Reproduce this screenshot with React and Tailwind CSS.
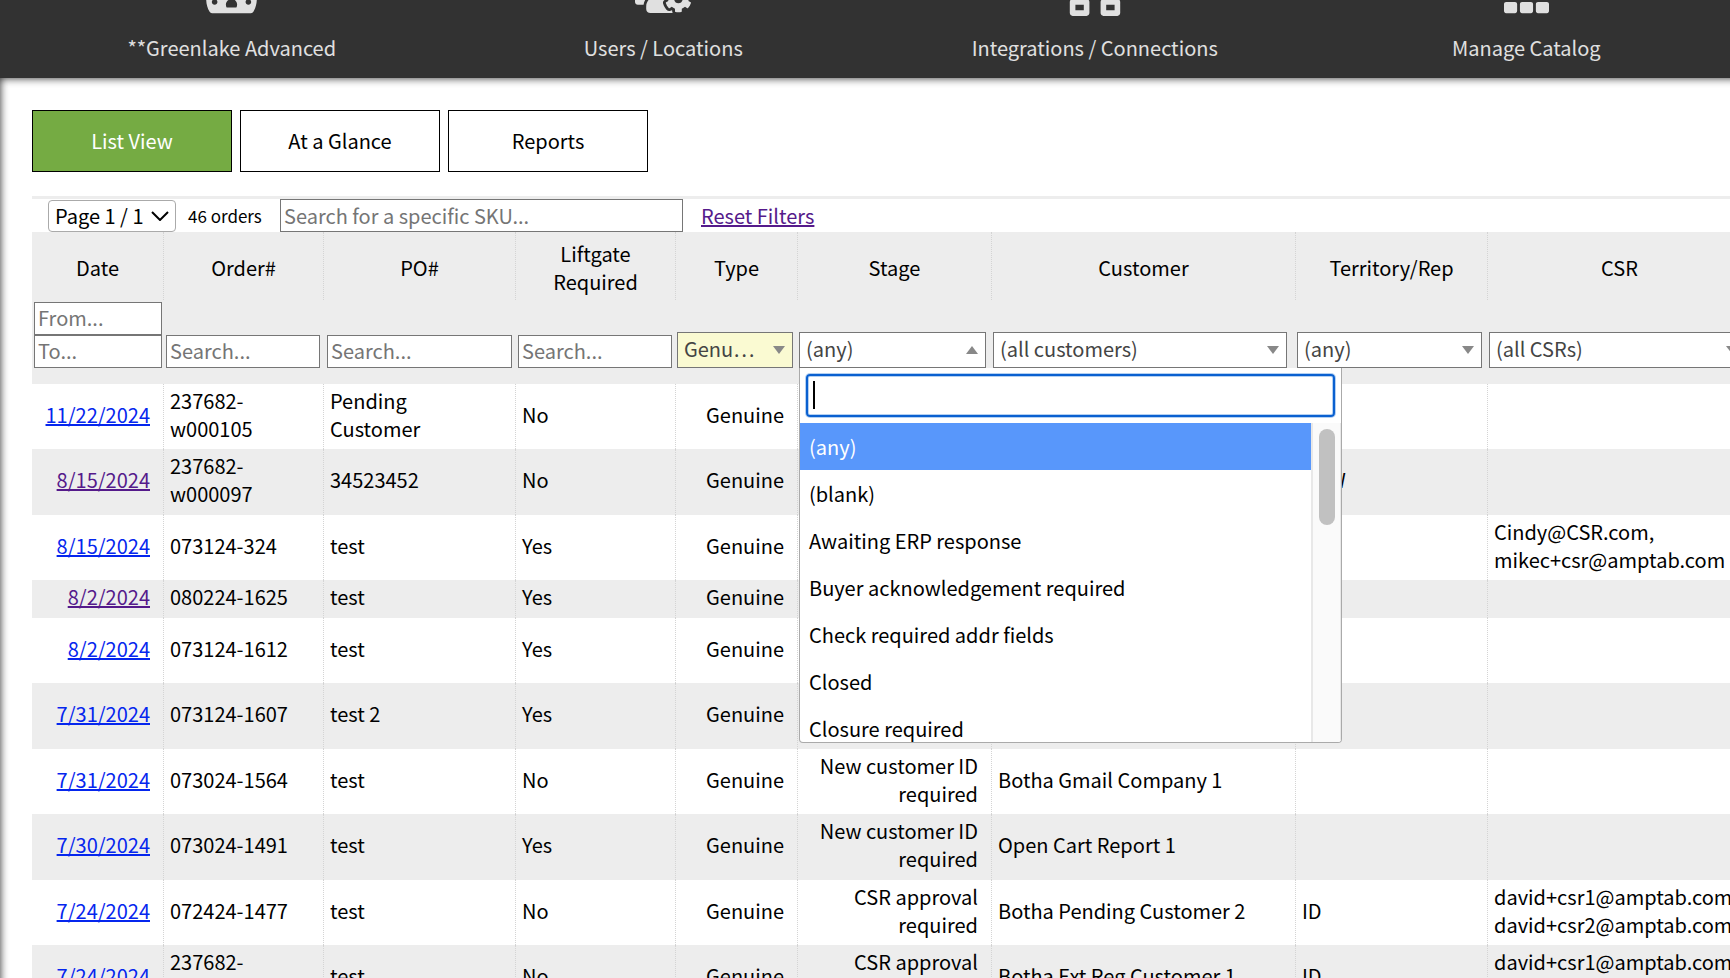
import { useState } from "react";
import { FaTachometerAlt, FaUsersCog, FaNetworkWired, FaTh } from "react-icons/fa";

const navItems = [
    { label: "**Greenlake Advanced", icon: FaTachometerAlt, size: "w-[51px]" },
    { label: "Users / Locations", icon: FaUsersCog, size: "w-[56px]" },
    { label: "Integrations / Connections", icon: FaNetworkWired, size: "w-[56px]" },
    { label: "Manage Catalog", icon: FaTh, size: "w-[45px]" },
];

const tabs = ["List View", "At a Glance", "Reports"];

const stages = [
    "(any)",
    "(blank)",
    "Awaiting ERP response",
    "Buyer acknowledgement required",
    "Check required addr fields",
    "Closed",
    "Closure required",
];

const orders = [
    { date: "11/22/2024", order: "237682-w000105", po: "Pending\nCustomer", liftgate: "No" },
    { date: "8/15/2024", visited: true, order: "237682-w000097", po: "34523452", liftgate: "No", territory: "NEW" },
    { date: "8/15/2024", order: "073124-324", po: "test", liftgate: "Yes", csr: "Cindy@CSR.com,\nmikec+csr@amptab.com" },
    { date: "8/2/2024", visited: true, order: "080224-1625", po: "test", liftgate: "Yes", compact: true },
    { date: "8/2/2024", order: "073124-1612", po: "test", liftgate: "Yes" },
    { date: "7/31/2024", order: "073124-1607", po: "test 2", liftgate: "Yes" },
    { date: "7/31/2024", order: "073024-1564", po: "test", liftgate: "No", stage: "New customer ID required", customer: "Botha Gmail Company 1" },
    { date: "7/30/2024", order: "073024-1491", po: "test", liftgate: "Yes", stage: "New customer ID required", customer: "Open Cart Report 1" },
    { date: "7/24/2024", order: "072424-1477", po: "test", liftgate: "No", stage: "CSR approval required", customer: "Botha Pending Customer 2", territory: "ID", csr: "david+csr1@amptab.com,\ndavid+csr2@amptab.com" },
    { date: "7/24/2024", order: "237682-w000091", po: "test", liftgate: "No", stage: "CSR approval required", customer: "Botha Ext Reg Customer 1", territory: "ID", csr: "david+csr1@amptab.com,\ndavid+csr2@amptab.com" },
];

const headings = ["Date", "Order#", "PO#", "Liftgate Required", "Type", "Stage", "Customer", "Territory/Rep", "CSR"];

function FilterInput({ label, placeholder }) {
    return (
        <input
            type="text"
            aria-label={label}
            placeholder={placeholder}
            className="block h-[33px] w-full border border-[#767676] bg-white px-[3px] pb-[2px] placeholder:text-[#757575] focus:outline-none"
        />
    );
}

function FilterSelect({ label, value, open, className = "bg-white pr-8" }) {
    return (
        <div className="relative">
            <select
                aria-label={label}
                defaultValue={value}
                className={`block h-9 w-full appearance-none text-ellipsis border border-[#767676] pb-[2px] pl-[6px] text-[#444] ${className}`}
            >
                <option>{value}</option>
            </select>
            <svg viewBox="0 0 12 8" className="pointer-events-none absolute right-2 top-[14px] h-2 w-3 fill-[#888]">
                <path d={open ? "M0 8 6 0l6 8z" : "M0 0h12L6 8z"} />
            </svg>
        </div>
    );
}

function StageDropdown() {
    const [active, setActive] = useState("(any)");

    return (
        <div className="absolute left-px top-[68px] z-10 w-[543px] overflow-hidden rounded-b border border-t-0 border-[#aaa] bg-white text-left">
            <div className="relative px-[6px] pb-[6px] pt-[6px]">
                <input
                    type="text"
                    aria-label="Search stages"
                    className="block h-[43px] w-full rounded border-2 border-[#0a60d0] px-1 shadow-[0_0_0_1px_#b3d0f2,inset_0_0_0_1px_#b3d0f2] focus:outline-none"
                />
                <span className="absolute left-[13px] top-[13px] h-7 w-[2px] bg-black" />
            </div>
            <div className="flex h-[319px]">
                <ul role="listbox" aria-label="Stage" className="flex-1 overflow-hidden">
                    {stages.map((stage) => (
                        <li
                            key={stage}
                            role="option"
                            aria-selected={stage === active}
                            onMouseEnter={() => setActive(stage)}
                            className={`h-[47px] px-[9px] leading-[47px] ${stage === active ? "bg-[#5897fb] text-white" : "text-black"}`}
                        >
                            {stage}
                        </li>
                    ))}
                </ul>
                <div className="w-[30px] border-l-2 border-r border-[#e8e8e8] bg-[#fafafa] pl-[6px] pt-[6px]">
                    <div className="h-24 w-4 rounded-full bg-[#c1c1c1]" />
                </div>
            </div>
        </div>
    );
}

function OrdersTable() {
    const cell = "border-r border-dotted border-[#d4d4d4] pb-1 pl-[6px] pr-[13px] whitespace-pre-line";

    return (
        <table className="w-[1720px] table-fixed border-separate border-spacing-0">
            <colgroup>
                <col className="w-[132px]" />
                <col className="w-[160px]" />
                <col className="w-[192px]" />
                <col className="w-[160px]" />
                <col className="w-[122px]" />
                <col className="w-[194px]" />
                <col className="w-[304px]" />
                <col className="w-[192px]" />
                <col className="w-[264px]" />
            </colgroup>
            <thead className="bg-[#ededed]">
                <tr className="h-[68px]">
                    {headings.map((heading) => (
                        <th key={heading} scope="col" className="border-r border-dotted border-[#d4d4d4] px-7 pt-[3px] font-normal">
                            <span className="flex justify-center">{heading}</span>
                        </th>
                    ))}
                </tr>
                <tr className="h-[84px] align-bottom">
                    <td className="px-[2px] pb-4">
                        <FilterInput label="Date from" placeholder="From..." />
                        <FilterInput label="Date to" placeholder="To..." />
                    </td>
                    <td className="pb-4 pl-[2px] pr-1">
                        <FilterInput label="Order number" placeholder="Search..." />
                    </td>
                    <td className="pb-4 pl-[3px] pr-1">
                        <FilterInput label="PO number" placeholder="Search..." />
                    </td>
                    <td className="pb-4 pl-[2px] pr-1">
                        <FilterInput label="Liftgate required" placeholder="Search..." />
                    </td>
                    <td className="pb-4 pl-px pr-[5px]">
                        <FilterSelect label="Type" value="Genuine" className="bg-[#fafad2] pr-9 [font-feature-settings:'pwid']" />
                    </td>
                    <td className="relative pb-4 pl-px pr-[6px]">
                        <FilterSelect label="Stage" value="(any)" open />
                        <StageDropdown />
                    </td>
                    <td className="pb-4 pl-px pr-[9px]">
                        <FilterSelect label="Customer" value="(all customers)" />
                    </td>
                    <td className="pb-4 pl-px pr-[6px]">
                        <FilterSelect label="Territory/Rep" value="(any)" />
                    </td>
                    <td className="pb-4 pl-px pr-[6px]">
                        <FilterSelect label="CSR" value="(all CSRs)" />
                    </td>
                </tr>
            </thead>
            <tbody>
                {orders.map((row) => (
                    <tr
                        key={row.order}
                        className={`even:bg-[#ededed] ${row.compact ? "h-[38px]" : "h-[65px] even:h-[66px]"}`}
                    >
                        <td className={`${cell} text-right`}>
                            <a href="#order" className={`underline ${row.visited ? "text-[#551a8b]" : "text-[#0526ee]"}`}>
                                {row.date}
                            </a>
                        </td>
                        <td className={cell}>{row.order}</td>
                        <td className={cell}>{row.po}</td>
                        <td className={cell}>{row.liftgate}</td>
                        <td className={`${cell} text-right`}>Genuine</td>
                        <td className={`${cell} text-right`}>{row.stage}</td>
                        <td className={cell}>{row.customer}</td>
                        <td className={cell}>{row.territory}</td>
                        <td className={cell}>{row.csr}</td>
                    </tr>
                ))}
            </tbody>
        </table>
    );
}

export default function App() {
    const [tab, setTab] = useState("List View");

    return (
        <div className="flex h-screen flex-col overflow-hidden bg-white font-['Noto_Sans_CJK_KR','Noto_Sans',sans-serif] text-[20px] leading-7 text-black">
            <nav className="-mr-3 flex h-[78px] shrink-0 items-end overflow-hidden bg-[#323232] pl-4 text-[#e0e0e0]">
                {navItems.map(({ label, icon: Icon, size }) => (
                    <a key={label} href="#nav" className="flex flex-1 flex-col items-center gap-[18px] pb-4">
                        <Icon className={`h-[45px] ${size}`} />
                        {label}
                    </a>
                ))}
            </nav>
            <main className="-mr-6 flex-1 pl-8 pt-8 shadow-[inset_0_0_9px_rgba(0,0,0,0.85)]">
                <div className="flex gap-2">
                    {tabs.map((name) => (
                        <button
                            key={name}
                            type="button"
                            onClick={() => setTab(name)}
                            className={`h-[62px] w-[200px] border border-black ${name === tab ? "bg-[#75ab43] text-white" : "bg-white"}`}
                        >
                            {name}
                        </button>
                    ))}
                </div>
                <div className="mt-6 flex h-9 items-center border-t-[3px] border-[#ededed] pl-4">
                    <div className="relative self-end">
                        <select aria-label="Page" className="block h-8 w-32 appearance-none rounded border border-[#aaa] bg-white pl-[6px]">
                            <option>Page 1 / 1</option>
                        </select>
                        <svg viewBox="0 0 18 10" className="pointer-events-none absolute right-[7px] top-[11px] h-[10px] w-[18px] fill-none stroke-black stroke-2">
                            <path d="M1 1l8 8 8-8" />
                        </svg>
                    </div>
                    <span className="ml-3 w-[92px] text-[17px]">46 orders</span>
                    <input
                        type="text"
                        aria-label="SKU"
                        placeholder="Search for a specific SKU..."
                        className="h-[33px] w-[403px] border border-[#767676] px-[3px] placeholder:text-[#757575] focus:outline-none"
                    />
                    <a href="#reset" className="ml-[18px] text-[#551a8b] underline">Reset Filters</a>
                </div>
                <OrdersTable />
            </main>
        </div>
    );
}
